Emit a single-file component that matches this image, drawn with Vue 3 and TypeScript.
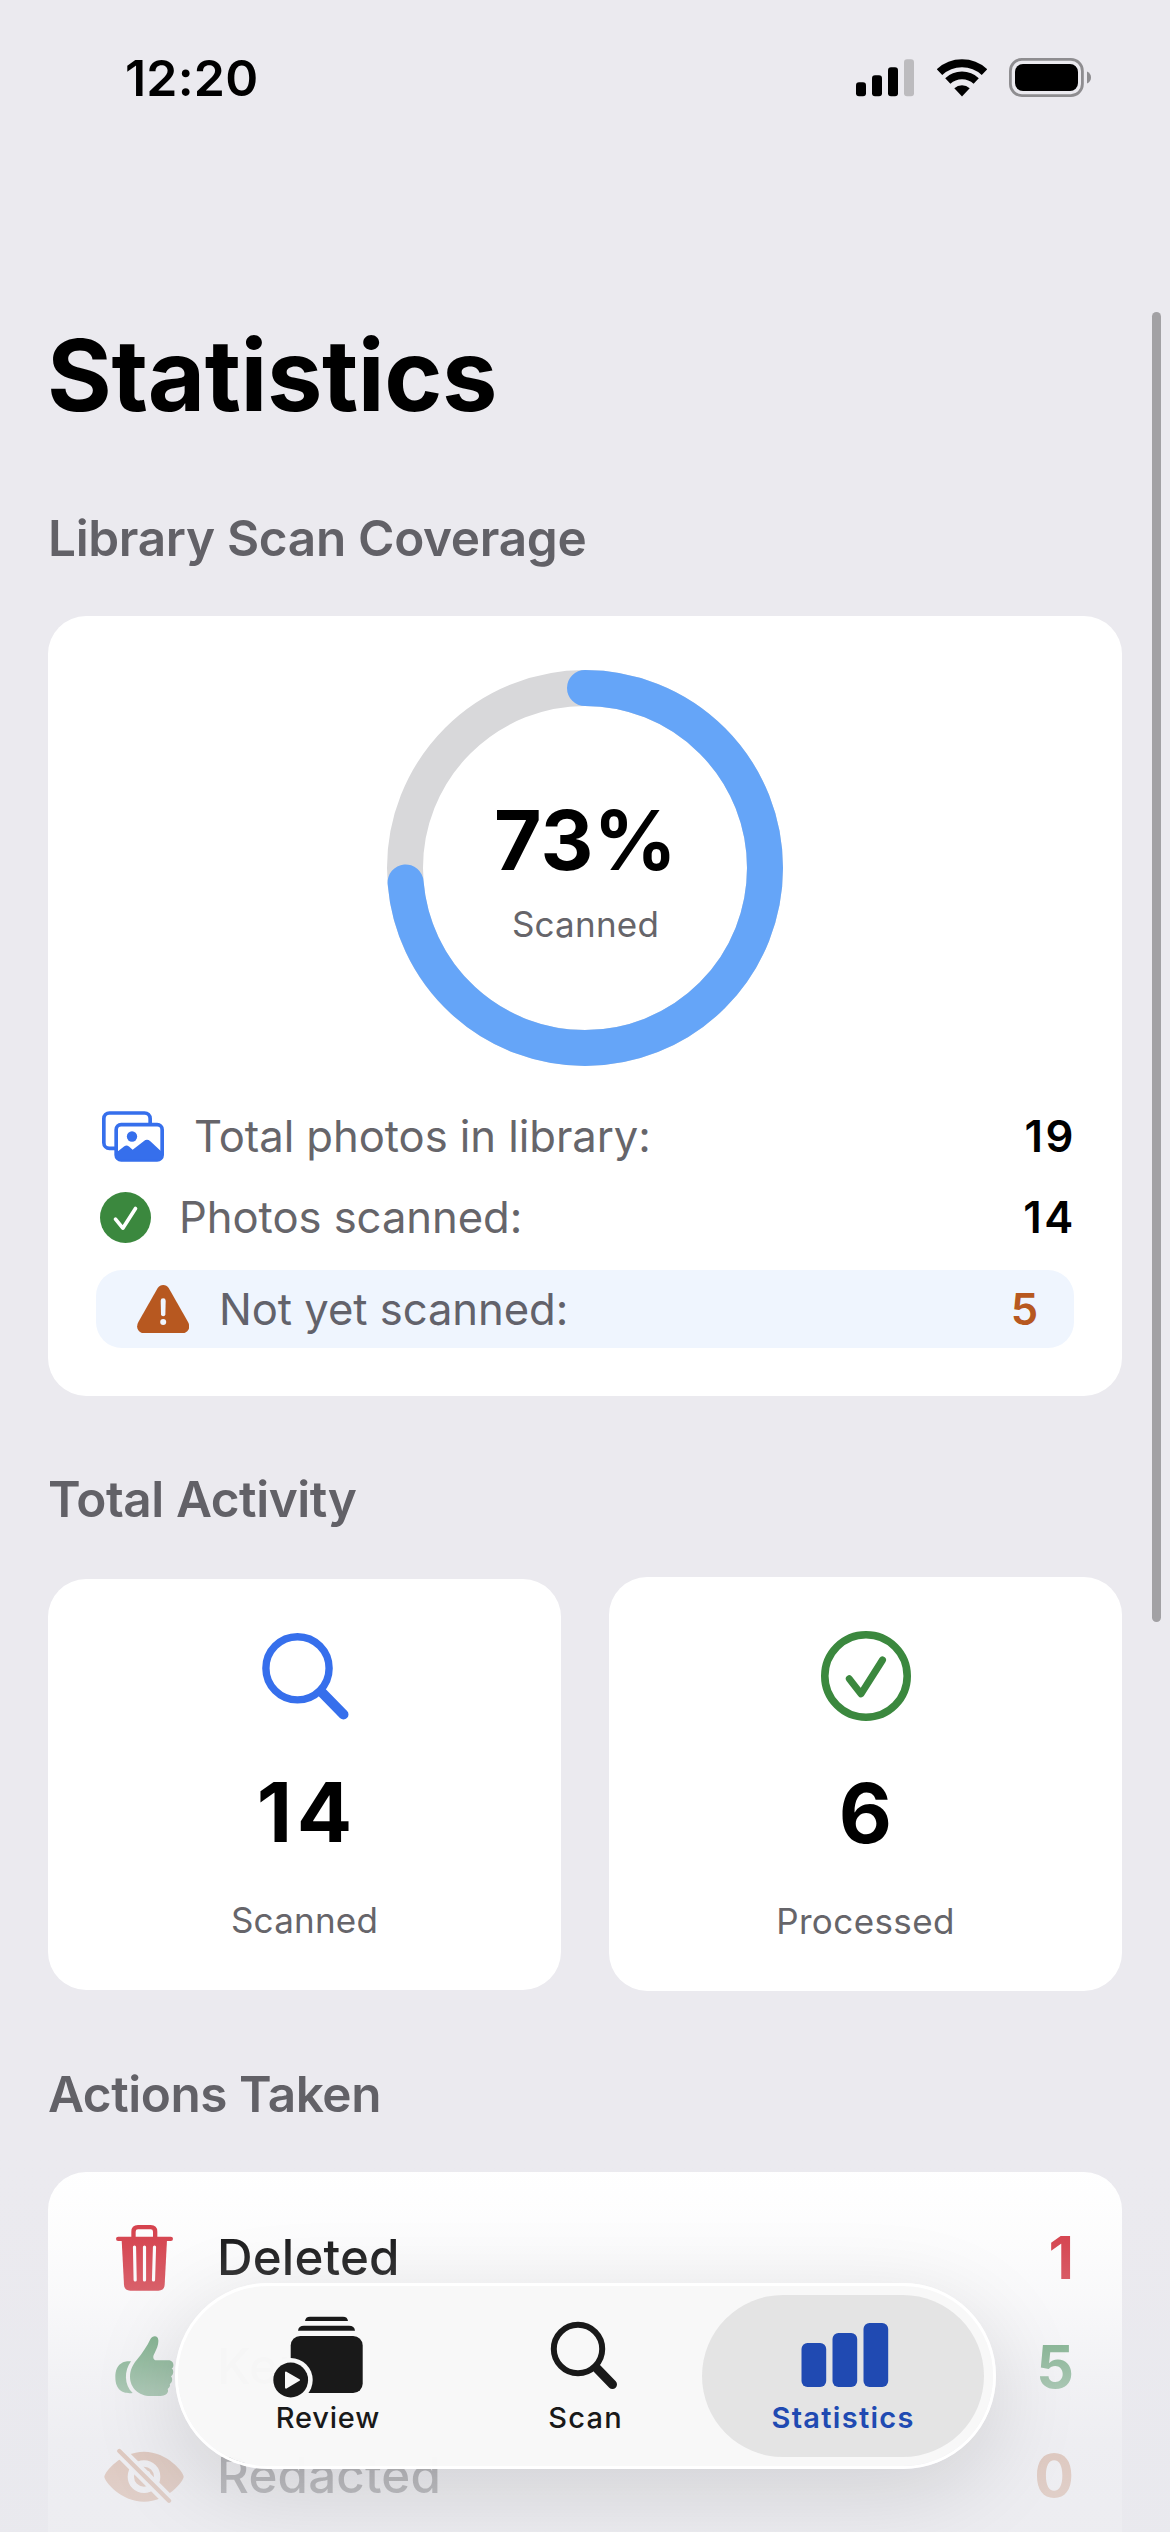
<script setup lang="ts">
interface ActionRow {
  id: 'trash' | 'thumb' | 'eye'
  label: string
  count: number
  color: string
}

const total = 19
const scanned = 14
const remaining = total - scanned
const processed = 6

const radius = 180
const circumference = 2 * Math.PI * radius
const progress = (scanned / total) * circumference
const percent = Math.floor((scanned / total) * 100)

const actions: ActionRow[] = [
  { id: 'trash', label: 'Deleted', count: 1, color: '#d32f3b' },
  { id: 'thumb', label: 'Kept', count: 5, color: '#37894a' },
  { id: 'eye', label: 'Redacted', count: 0, color: '#b75820' },
]
</script>

<template>
  <div class="screen">
    <header class="status-bar">
      <span class="time">12:20</span>
      <div class="status-icons">
        <svg width="58" height="38" viewBox="0 0 58 38">
          <rect x="0" y="23.3" width="10" height="14" rx="3" />
          <rect x="16" y="16.3" width="10" height="21" rx="3" />
          <rect x="32" y="8.3" width="10" height="29" rx="3" />
          <rect x="48" y="0.3" width="10" height="37" rx="3" fill="#bcbbbe" />
        </svg>
        <svg width="50" height="38" viewBox="0 0 50 38">
          <path d="M2.5 13.1 A33 33 0 0 1 47.5 13.1" fill="none" stroke="#000" stroke-width="8" />
          <path d="M10.8 22 A20.8 20.8 0 0 1 39.2 22" fill="none" stroke="#000" stroke-width="7.6" />
          <path d="M25 37.4 L17.3 29.2 A11.8 11.8 0 0 1 32.7 29.2 Z" />
        </svg>
        <svg width="82" height="39" viewBox="0 0 82 39">
          <rect x="1.4" y="1.4" width="72" height="36.2" rx="11.5" fill="none" stroke="#8e8d90" stroke-width="2.8" />
          <rect x="6" y="6" width="63" height="27" rx="8" />
          <path d="M78 13.5 Q82 15.3 82 19.5 Q82 23.7 78 25.5 Z" fill="#8e8d90" />
        </svg>
      </div>
    </header>

    <main class="content">
      <h1>Statistics</h1>

      <section>
        <h2 class="heading-coverage">Library Scan Coverage</h2>
        <div class="card coverage">
          <div class="ring">
            <svg width="396" height="396" viewBox="0 0 396 396">
              <circle cx="198" cy="198" :r="radius" fill="none" stroke="#d8d8da" stroke-width="36" />
              <circle
                cx="198" cy="198" :r="radius" fill="none" stroke="#65a5f8" stroke-width="36"
                stroke-linecap="round" :stroke-dasharray="`${progress} ${circumference}`"
                transform="rotate(-90 198 198)"
              />
            </svg>
            <div class="ring-label">
              <span class="percent">{{ percent }}%</span>
              <span class="caption">Scanned</span>
            </div>
          </div>

          <div class="rows">
            <div class="row">
              <svg class="icon-photos" width="62" height="51" viewBox="36 34 186 152">
                <rect x="41.5" y="39.5" width="139" height="106" rx="17" fill="none" stroke="#366fec" stroke-width="11" />
                <rect x="78.5" y="74.5" width="138" height="106" rx="15" fill="#fff" stroke="#366fec" stroke-width="11" />
                <circle cx="126" cy="110" r="15.5" fill="#366fec" />
                <path d="M80 157 L103 139 Q110 134 117 140 L128 150 L161 124 Q171 116 181 124 L214 155 V166 Q214 180 200 180 H94 Q80 180 80 166 Z" fill="#366fec" />
              </svg>
              <span class="row-label">Total photos in library:</span>
              <span class="row-value wide">{{ total }}</span>
            </div>
            <div class="row">
              <svg class="icon-check" width="51" height="51" viewBox="29.5 275.5 153 153">
                <circle cx="106" cy="352" r="76.5" fill="#3b883e" />
                <path d="M76 357 L98 384 L136 325" fill="none" stroke="#fff" stroke-width="11" stroke-linecap="round" stroke-linejoin="round" />
              </svg>
              <span class="row-label">Photos scanned:</span>
              <span class="row-value wide">{{ scanned }}</span>
            </div>
            <div class="row pending">
              <svg width="52.4" height="48" viewBox="141 555 157 144">
                <path d="M203 564 Q209 555 219.500 555 Q230 555 236 564 L294 666 Q301 679 295 689 Q289 699 278 699 H161 Q150 699 144 689 Q138 679 145 666 Z" fill="#b75820" />
                <path d="M212 602 Q212 595 219.500 595 Q227 595 227 602 L226 643 Q225.500 649 219.500 649 Q213.500 649 213 643 Z" fill="#eff5fe" />
                <circle cx="219.500" cy="666" r="9" fill="#eff5fe" />
              </svg>
              <span class="row-label">Not yet scanned:</span>
              <span class="row-value">{{ remaining }}</span>
            </div>
          </div>
        </div>
      </section>

      <section>
        <h2 class="heading-tight">Total Activity</h2>
        <div class="tiles">
          <div class="card tile tile-scanned">
            <svg width="90" height="90" viewBox="0 0 90 90">
              <circle cx="37.500" cy="37.300" r="31.600" fill="none" stroke="#366fec" stroke-width="7.400" />
              <path d="M62 61.500 L83.500 83.500" stroke="#366fec" stroke-width="10" stroke-linecap="round" />
            </svg>
            <span class="tile-value spaced">{{ scanned }}</span>
            <span class="caption">Scanned</span>
          </div>
          <div class="card tile tile-processed">
            <svg width="90" height="90" viewBox="0 0 90 90">
              <circle cx="45" cy="45" r="41.200" fill="none" stroke="#3b883e" stroke-width="7.600" />
              <path d="M28.300 47.800 L40 62.800 L61.500 29" fill="none" stroke="#3b883e" stroke-width="7" stroke-linecap="round" stroke-linejoin="round" />
            </svg>
            <span class="tile-value">{{ processed }}</span>
            <span class="caption caption-wide">Processed</span>
          </div>
        </div>
      </section>

      <section>
        <h2 class="heading-tight">Actions Taken</h2>
        <div class="card actions">
          <div v-for="a in actions" :key="a.id" class="action" :style="{ color: a.color }">
            <div class="action-icon">
              <svg v-if="a.id === 'trash'" width="57" height="66" viewBox="63 43 171 198" fill="currentColor">
                <path d="M115.500 84 V63 Q115.500 49.500 129 49.500 H167 Q180.500 49.500 180.500 63 V84" fill="none" stroke="currentColor" stroke-width="13" />
                <rect x="63" y="78" width="171" height="13" rx="6.500" />
                <path d="M80 88 H216 L209 222 Q208 240 190 240 H106 Q88 240 87 222 Z" />
                <path d="M118.500 109 L120.500 208 M148.500 109 V208 M178.500 109 L175.500 208" stroke="#fff" stroke-width="9.500" stroke-linecap="round" />
              </svg>
              <svg v-else-if="a.id === 'thumb'" width="59" height="61" viewBox="59 377 177 183" fill="currentColor">
                <path d="M104 499 C104 480 112 463 124 449 C142 428 156 406 165 387 C171 374 189 374 189 390 C190 403 184 416 178 428 C170 442 174 451 186 450 L219 450 C236 450 238 470 229 474 C236 479 235 494 227 498 C233 504 231 518 223 521 C227 527 220 533 217 536 C222 548 210 557 196 557 L165 557 C130 557 104 532 104 499 Z" />
                <path d="M107 453 C98 452 60 450 60 501 C60 545 90 551 112 548 C86 525 86 480 107 453 Z" />
              </svg>
              <svg v-else width="80" height="56" viewBox="26 709 240 168" fill="currentColor">
                <path d="M27 795 C27 782 76 720 146 720 C216 720 265 782 265 795 C265 808 216 870 146 870 C76 870 27 808 27 795 Z" />
                <circle cx="146" cy="795" r="39.500" fill="none" stroke="#fff" stroke-width="19" />
                <circle cx="154" cy="788" r="11" fill="#fff" />
                <path d="M66 712 L227 873" stroke="#fff" stroke-width="36" />
                <path d="M72 718 L221 867" stroke="currentColor" stroke-width="13" stroke-linecap="round" />
              </svg>
            </div>
            <span class="action-label">{{ a.label }}</span>
            <span class="action-count">{{ a.count }}</span>
          </div>
        </div>
      </section>
    </main>

    <div class="fade"></div>
    <div class="scrollbar"></div>

    <nav class="tab-bar">
      <div class="tab">
        <svg width="110" height="90" viewBox="273 2310 110 90" fill="#191919">
          <path d="M305 2321 Q305.500 2316.700 310 2316.700 H343 Q347.500 2316.700 348 2321 Z" />
          <path d="M298 2330.700 Q298.500 2325.700 304 2325.700 H349 Q354.500 2325.700 355 2330.700 Z" />
          <rect x="290.700" y="2336" width="72" height="57" rx="9.500" />
          <circle cx="290.700" cy="2380" r="22" fill="#f8f8f8" />
          <circle cx="290.700" cy="2380" r="17.400" />
          <path d="M286 2372.600 L299 2380 L286 2387.600 Z" fill="#f8f8f8" stroke="#f8f8f8" stroke-width="2" stroke-linejoin="round" />
        </svg>
        <span class="tab-label review">Review</span>
      </div>
      <div class="tab">
        <svg width="110" height="90" viewBox="530.500 2310 110 90">
          <circle cx="578.500" cy="2349" r="24.200" fill="none" stroke="#191919" stroke-width="6" />
          <path d="M597.500 2368.500 L613 2384.500" stroke="#191919" stroke-width="9" stroke-linecap="round" />
        </svg>
        <span class="tab-label scan">Scan</span>
      </div>
      <div class="tab active">
        <svg width="110" height="90" viewBox="787.500 2310 110 90" fill="#204ab2">
          <rect x="801" y="2343" width="24.700" height="44" rx="6" />
          <rect x="832" y="2333" width="24.700" height="54" rx="6" />
          <rect x="863" y="2323" width="24.700" height="64" rx="6" />
        </svg>
        <span class="tab-label statistics">Statistics</span>
      </div>
    </nav>
  </div>
</template>

<style>
body {
  margin: 0;
  background: #ebeaef;
}
</style>

<style scoped>
.screen {
  position: relative;
  width: 1170px;
  height: 2532px;
  overflow: hidden;
  background: #ebeaef;
  color: #000;
  font-family: Inter, "Liberation Sans", sans-serif;
  white-space: nowrap;
}

svg {
  display: block;
  flex: none;
}

.status-bar {
  display: flex;
  align-items: center;
  justify-content: space-between;
  height: 155px;
  padding: 0 79px 0 125px;
}

.time {
  font-size: 50px;
  font-weight: 600;
  line-height: 60px;
  letter-spacing: 0.2px;
}

.status-icons {
  display: flex;
  align-items: center;
  gap: 22.5px;
}

.content {
  padding: 160px 48px 0;
}

h1 {
  margin: 0 0 0 -1px;
  font-size: 99px;
  font-weight: 700;
  line-height: 120px;
  letter-spacing: -0.43px;
}

section {
  padding-top: 73px;
}

h2 {
  margin: 0 0 48px;
  font-size: 49.5px;
  font-weight: 600;
  line-height: 60px;
  color: #626167;
}

.heading-coverage {
  letter-spacing: -0.32px;
}

.heading-tight {
  letter-spacing: -0.44px;
}

.card {
  background: #fff;
  border-radius: 38px;
}

.coverage {
  display: flex;
  flex-direction: column;
  align-items: center;
  box-sizing: border-box;
  height: 780px;
  padding: 54px 48px 48px;
}

.ring {
  display: grid;
  place-items: center;
}

.ring > * {
  grid-area: 1 / 1;
}

.ring-label {
  display: flex;
  flex-direction: column;
  align-items: center;
  gap: 11px;
  padding-left: 1px;
}

.percent {
  font-size: 82px;
  font-weight: 700;
  line-height: 100px;
  letter-spacing: 0.2px;
}

.caption {
  font-size: 35px;
  line-height: 44px;
  letter-spacing: 0.22px;
  color: #66656a;
}

.caption-wide {
  letter-spacing: 0.4px;
}

.rows {
  align-self: stretch;
  margin-top: 30px;
}

.row {
  display: flex;
  align-items: center;
  height: 81px;
  font-size: 43.6px;
  letter-spacing: -0.05px;
}

.icon-photos {
  margin: 0 30px 0 6px;
}

.icon-check {
  margin: 0 28px 0 4px;
}

.row-label {
  color: #66656a;
}

.row-value {
  margin-left: auto;
  font-weight: 600;
}

.row-value.wide {
  margin-right: -2px;
  letter-spacing: 2.6px;
}

.pending {
  box-sizing: border-box;
  height: 78px;
  margin-top: 12px;
  padding: 0 36px 0 41px;
  border-radius: 26px;
  background: #eff5fe;
}

.pending .row-label {
  margin-left: 29.6px;
  color: #62626b;
}

.pending .row-value {
  color: #b75820;
}

.tiles {
  display: grid;
  grid-template-columns: 1fr 1fr;
  gap: 48px;
  align-items: start;
}

.tile {
  display: flex;
  flex-direction: column;
  align-items: center;
}

.tile-scanned {
  margin-top: 2px;
  padding: 52px 0 48px;
}

.tile-processed {
  padding: 54px 0 48px;
}

.tile-value {
  margin: 42px 0 35px;
  font-size: 82px;
  font-weight: 700;
  line-height: 100px;
}

.tile-processed .tile-value {
  margin: 43px 0 35px;
}

.tile-value.spaced {
  margin-right: -4.5px;
  letter-spacing: 4.5px;
}

.actions {
  padding: 31px 48px;
  height: 400px;
}

.action {
  display: flex;
  align-items: center;
  height: 109px;
}

.action-icon {
  display: flex;
  justify-content: center;
  width: 96px;
  margin-right: 25px;
}

.action-label {
  margin-bottom: 2px;
  font-size: 49.3px;
  font-weight: 500;
  letter-spacing: 0.15px;
  color: #000;
}

.action-count {
  margin-left: auto;
  font-size: 59px;
  font-weight: 700;
}

.fade {
  position: absolute;
  inset: 2150px 0 0;
  background: linear-gradient(
    to bottom,
    rgba(233, 233, 238, 0) 0,
    rgba(233, 233, 238, 0.05) 50px,
    rgba(233, 233, 238, 0.145) 95px,
    rgba(233, 233, 238, 0.21) 120px,
    rgba(233, 233, 238, 0.28) 145px,
    rgba(233, 233, 238, 0.46) 190px,
    rgba(233, 233, 238, 0.65) 240px,
    rgba(233, 233, 238, 0.77) 290px,
    rgba(233, 233, 238, 0.81) 340px,
    rgba(233, 233, 238, 0.83) 382px
  );
}

.scrollbar {
  position: absolute;
  top: 312px;
  right: 9px;
  width: 9px;
  height: 1310px;
  border-radius: 4.5px;
  background: #a2a1a4;
}

.tab-bar {
  position: absolute;
  left: 174.5px;
  top: 2283px;
  display: flex;
  box-sizing: border-box;
  width: 821.5px;
  height: 186px;
  padding: 9px;
  border: 3px solid #fff;
  border-radius: 93px;
  background: rgba(248, 248, 248, 0.985);
  background-clip: padding-box;
  box-shadow: 0 22px 90px rgba(0, 0, 0, 0.125);
}

.tab {
  display: flex;
  flex-direction: column;
  align-items: center;
  box-sizing: border-box;
  width: 282px;
  height: 162px;
  padding-top: 15px;
  border-radius: 81px;
  color: #191919;
}

.tab + .tab {
  margin-left: -24.5px;
}

.tab.active {
  background: #e4e4e4;
  color: #204ab2;
}

.tab-label {
  font-size: 29px;
  font-weight: 500;
  line-height: 36px;
}

.review {
  margin-right: -0.8px;
  letter-spacing: 0.82px;
}

.scan {
  margin-right: -1.2px;
  letter-spacing: 1.26px;
}

.statistics {
  margin-right: -1.3px;
  font-weight: 600;
  letter-spacing: 1.3px;
}
</style>
